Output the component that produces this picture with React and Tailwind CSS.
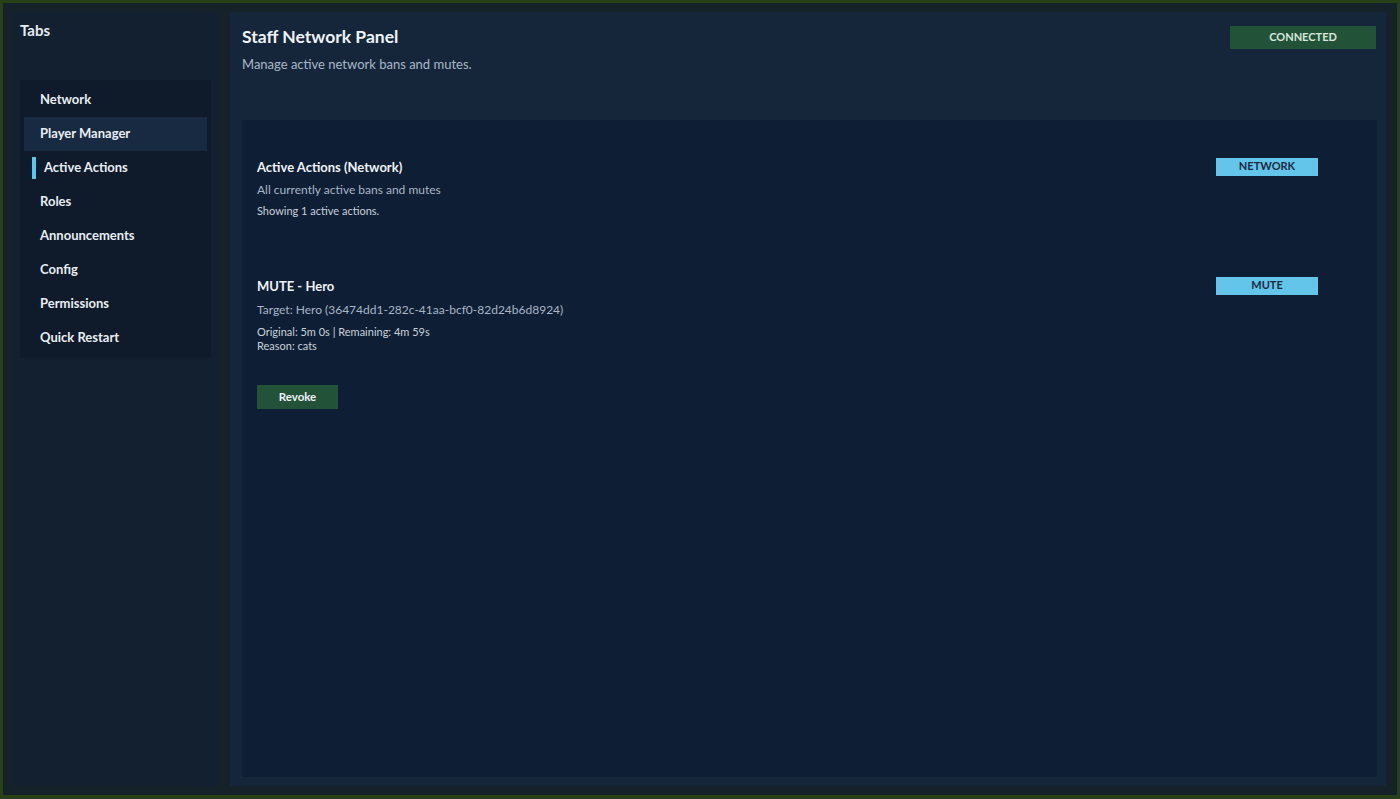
import React from 'react';

const tabs = ['Network', 'Player Manager', 'Active Actions', 'Roles', 'Announcements', 'Config', 'Permissions', 'Quick Restart'];

export default function App() {
    const active = 'Active Actions';
    const hovered = 'Player Manager';

    return (
        <div className="h-[799px] w-[1400px] bg-[#274017] p-[3px] pb-[4px] font-['Lato','Noto_Sans',sans-serif]">
            <div className="flex h-full gap-[11px] bg-[#16222a] py-[9px] pl-[9px] pr-[11px]">
                {/* Sidebar */}
                <aside className="flex w-[207px] flex-col bg-[#122030] px-[8px] pt-[7px]">
                    <h2 className="text-[15px] font-bold text-[#e6ecf2]">Tabs</h2>
                    <nav className="mt-[38px] flex flex-col bg-[#0f1a2a] px-[4px] py-[3px]">
                        {tabs.map((t) => (
                            <div
                                key={t}
                                className={
                                    'flex h-[34px] items-center text-[13px] font-bold text-[#e8eef4] ' +
                                    (t === hovered ? 'bg-[#172a42] pl-[16px]' : 'pl-[16px]')
                                }
                            >
                                {t === active && <span className="mr-[8px] -ml-[8px] h-[22px] w-[4px] bg-[#56c8f0]"></span>}
                                {t}
                            </div>
                        ))}
                    </nav>
                </aside>

                {/* Main */}
                <main className="flex flex-1 flex-col bg-[#15263a] pb-[9px] pl-[12px] pr-[9px] pt-[14px]">
                    <header className="flex items-start justify-between">
                        <div>
                            <h1 className="mt-[1px] text-[17.5px] leading-[20px] font-bold text-[#eef3f8]">Staff Network Panel</h1>
                            <p className="mt-[8px] text-[13px] text-[#a9b8c9]">Manage active network bans and mutes.</p>
                        </div>
                        <span className="mr-[1px] flex h-[23px] w-[146px] items-center justify-center bg-[#225238] text-[11px] font-bold text-[#d8e8dc]">
                            CONNECTED
                        </span>
                    </header>

                    <section className="mt-[45px] flex-1 bg-[#0e1f35] pl-[15px] pr-[59px] pt-[38px]">
                        <div className="flex items-start justify-between">
                            <div>
                                <h3 className="text-[13px] leading-[18px] font-bold text-[#eef3f8]">Active Actions (Network)</h3>
                                <p className="mt-[6px] text-[12px] leading-[16px] text-[#a9b5c6]">All currently active bans and mutes</p>
                                <p className="mt-[6px] text-[11px] leading-[14px] text-[#c9d1db]">Showing 1 active actions.</p>
                            </div>
                            <span className="flex h-[18px] w-[102px] items-center justify-center bg-[#63c5ea] text-[11px] font-bold text-[#1b2b3e]">
                                NETWORK
                            </span>
                        </div>

                        <div className="mt-[59px] flex items-start justify-between">
                            <div>
                                <h3 className="text-[13px] leading-[18px] font-bold text-[#eef3f8]">MUTE - Hero</h3>
                                <p className="mt-[7px] text-[12px] leading-[16px] text-[#a9b5c6]">Target: Hero (36474dd1-282c-41aa-bcf0-82d24b6d8924)</p>
                                <p className="mt-[7px] text-[11px] leading-[14px] text-[#c9d1db]">Original: 5m 0s | Remaining: 4m 59s</p>
                                <p className="text-[11px] leading-[14px] text-[#c9d1db]">Reason: cats</p>
                                <button className="mt-[32px] h-[24px] w-[81px] bg-[#225238] text-[11.5px] font-bold text-[#eef3f8]">
                                    Revoke
                                </button>
                            </div>
                            <span className="flex h-[18px] w-[102px] items-center justify-center bg-[#63c5ea] text-[11px] font-bold text-[#1b2b3e]">
                                MUTE
                            </span>
                        </div>
                    </section>
                </main>
            </div>
        </div>
    );
}
